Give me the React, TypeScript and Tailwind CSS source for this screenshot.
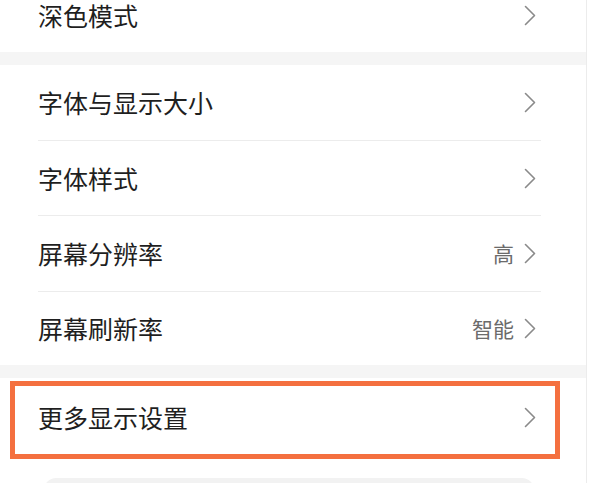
import React from "react";

const Chevron = () => (
  <svg width="12" height="21" viewBox="0 0 12 21" className="shrink-0 mr-[5px]">
    <path d="M1.5 1.5 L10.5 10.5 L1.5 19.5" fill="none" stroke="#8a8a8a" strokeWidth="1.6" strokeLinecap="round" strokeLinejoin="round" />
  </svg>
);

const Row = ({ label, value, divider = false, h = "h-[75px]" }: { label: string; value?: string; divider?: boolean; h?: string }) => (
  <div className={`bg-white shrink-0 ${h}`}>
    <div className={`ml-[38px] w-[503px] h-full flex items-center justify-between ${divider ? "border-b border-[#ececec]" : ""}`}>
      <span className="text-[25px] leading-none text-[#1f1f1f]">{label}</span>
      <div className="flex items-center gap-[10px]">
        {value && <span className="text-[21px] leading-none text-[#6b6b6b]">{value}</span>}
        <Chevron />
      </div>
    </div>
  </div>
);

export default function App() {
  return (
    <div
      className="relative w-[592px] h-[483px] overflow-hidden bg-white flex"
      style={{ fontFamily: '"Noto Sans CJK SC", "Noto Sans", sans-serif' }}
    >
      <div className="w-[587px] flex flex-col border-r border-[#ececec]">
        <div className="bg-white h-[52px] pb-[22px] shrink-0">
          <div className="ml-[38px] w-[503px] h-full flex items-center justify-between">
            <span className="text-[25px] leading-none text-[#1f1f1f]">深色模式</span>
            <Chevron />
          </div>
        </div>
        <div className="h-[13px] shrink-0 bg-[#f5f5f5]" />
        <Row label="字体与显示大小" divider h="h-[76px]" />
        <Row label="字体样式" divider h="h-[75px]" />
        <Row label="屏幕分辨率" value="高" divider h="h-[76px]" />
        <Row label="屏幕刷新率" value="智能" h="h-[73px]" />
        <div className="h-[13px] shrink-0 bg-[#f5f5f5]" />
        <Row label="更多显示设置" h="h-[78px]" />
        <div className="h-[22px] shrink-0 bg-white" />
        <div className="ml-[44px] w-[490px] h-[40px] shrink-0 rounded-[12px] bg-[#f2f2f2]" />
      </div>
      <div className="absolute left-[10px] top-[381px] w-[550px] h-[78px] border-[5px] border-[#f4703f]" />
    </div>
  );
}
